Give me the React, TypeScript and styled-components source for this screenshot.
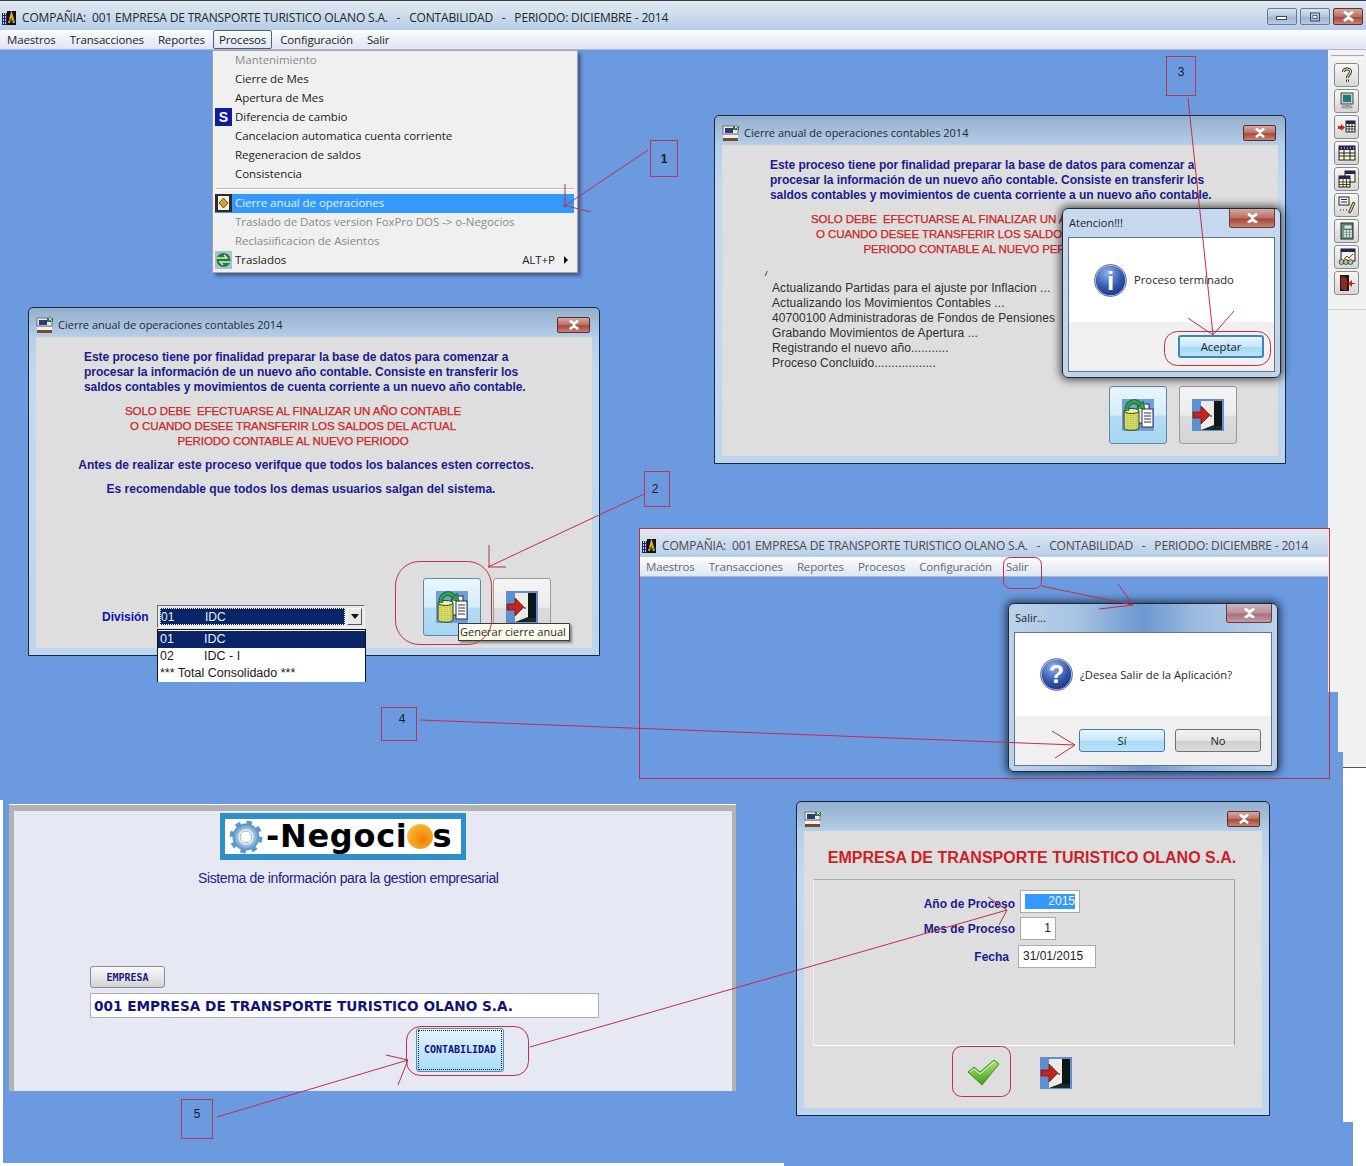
import React from "react";
import styled, { createGlobalStyle } from "styled-components";

const Global = createGlobalStyle`
  html, body { margin: 0; padding: 0; background: #fff; }
  body { font-family: "Liberation Sans", Arial, sans-serif; }
`;

const ui = `"Open Sans", "Noto Sans", sans-serif`;
const arial = `"Liberation Sans", Arial, sans-serif`;
const mono = `"DejaVu Sans Mono", "Liberation Mono", monospace`;
const closeFace = "linear-gradient(#d2aaa3, #bb6f61 50%, #a4483b 55%, #c58476)";

const Desktop = styled.div`
  position: relative;
  width: 1366px;
  height: 1166px;
  overflow: hidden;
  background: #6b9ae0;
`;

const Patch = styled.div<{ $x: number; $y: number; $w: number; $h: number; $c: string }>`
  position: absolute;
  left: ${(p) => p.$x}px;
  top: ${(p) => p.$y}px;
  width: ${(p) => p.$w}px;
  height: ${(p) => p.$h}px;
  background: ${(p) => p.$c};
`;

/* ---------- application chrome ---------- */
const AppHeader = styled.header`
  width: 100%;
`;
const FloatingHeader = styled.header`
  position: absolute;
  left: 640px;
  top: 529px;
  width: 688px;
`;
const TitleBar = styled.div<{ $h: number }>`
  display: flex;
  align-items: center;
  height: ${(p) => p.$h}px;
  box-sizing: border-box;
  padding: 5px 0 0 2px;
  background: linear-gradient(#e2eaf2, #b6cde9);
`;
const TopEdge = styled.div`
  height: 1px;
  background: #3a3f46;
`;
const AppTitle = styled.span<{ $dim?: boolean }>`
  margin-left: 4px;
  font: 12px/16px ${ui};
  letter-spacing: -0.17px;
  white-space: pre;
  color: ${(p) => (p.$dim ? "#4a4a4a" : "#262626")};
`;
const Controls = styled.div`
  display: flex;
  gap: 3px;
  margin-left: auto;
  margin-right: 3px;
  margin-top: -3px;
`;
const WinControl = styled.button<{ $close?: boolean }>`
  display: flex;
  align-items: center;
  justify-content: center;
  width: 30px;
  height: 17px;
  padding: 0;
  border: 1px solid ${(p) => (p.$close ? "#6a2f2a" : "#6c7c90")};
  border-radius: 2px;
  background: ${(p) => (p.$close ? closeFace : "linear-gradient(#d8e4f0, #b2c6de 50%, #9cb4d0 55%, #b8cce2)")};
`;
const MenuBar = styled.nav<{ $dim?: boolean }>`
  display: flex;
  gap: 14px;
  height: 20px;
  box-sizing: border-box;
  padding-left: ${(p) => (p.$dim ? 6 : 7)}px;
  align-items: center;
  background: linear-gradient(#fdfefe, #f4f6fb 25%, #dfe5f2);
  border-bottom: 1px solid #a9b6c9;
  font: 11.5px/16px ${ui};
  letter-spacing: -0.15px;
  color: ${(p) => (p.$dim ? "#666a70" : "#1e1e1e")};
`;
const MenuItem = styled.span<{ $open?: boolean }>`
  position: relative;
  ${(p) =>
    p.$open &&
    `&::before{content:"";position:absolute;left:-6px;right:-6px;top:-2px;bottom:-1px;border:1px solid #50607a;border-radius:2px;}`}
`;
const MenuPanel = styled.div`
  position: absolute;
  z-index: 6;
  left: 212px;
  top: 50px;
  width: 366px;
  height: 223px;
  box-sizing: border-box;
  padding: 0 3px 0 2px;
  background: #f0f0f0;
  border: 1px solid #a4a4a4;
  box-shadow: 3px 3px 3px rgba(40, 50, 80, 0.55);
  font: 11.5px/15px ${ui};
  letter-spacing: -0.05px;
`;
const Row = styled.div<{ $sel?: boolean; $off?: boolean }>`
  display: flex;
  align-items: center;
  height: 19px;
  box-sizing: border-box;
  padding-bottom: 2px;
  background: ${(p) => (p.$sel ? "#3399ff" : "transparent")};
  color: ${(p) => (p.$sel ? "#e8f2ff" : p.$off ? "#8a8a8a" : "#222")};
`;
const Gutter = styled.span`
  display: flex;
  width: 20px;
  flex: none;
  justify-content: flex-start;
`;
const Shortcut = styled.span`
  margin-left: auto;
  margin-right: 9px;
`;
const Caret = styled.span`
  width: 0;
  height: 0;
  margin-right: 6px;
  border-left: 4px solid #111;
  border-top: 4px solid transparent;
  border-bottom: 4px solid transparent;
`;
const Separator = styled.div`
  height: 1px;
  margin: 4px 0 4px 1px;
  background: #b8b8b8;
  border-bottom: 1px solid #fff;
`;

/* ---------- toolbar ---------- */
const ToolStrip = styled.aside`
  position: absolute;
  left: 1328px;
  top: 50px;
  width: 38px;
  height: 260px;
  box-sizing: border-box;
  padding: 13px 0 0 6px;
  display: flex;
  flex-direction: column;
  gap: 2px;
  background: #f1f1f1;
  border-bottom: 1px solid #cfd3dc;
  &::before {
    content: "";
    position: absolute;
    left: 3px;
    right: 2px;
    top: 5px;
    height: 2px;
    border-top: 1px solid #a8a8a8;
    border-bottom: 1px solid #fff;
  }
`;
const ToolButton = styled.button`
  display: flex;
  align-items: center;
  justify-content: center;
  width: 25px;
  height: 24px;
  padding: 0;
  border: 1px solid #8a8a8a;
  border-radius: 3px;
  background: linear-gradient(#f8f8f8, #e6e6e6 50%, #d6d6d6);
`;

/* ---------- dialog windows ---------- */
const Win = styled.section<{ $x: number; $y: number; $w: number; $h: number }>`
  position: absolute;
  left: ${(p) => p.$x}px;
  top: ${(p) => p.$y}px;
  width: ${(p) => p.$w}px;
  height: ${(p) => p.$h}px;
  box-sizing: border-box;
  display: flex;
  flex-direction: column;
  padding: 0 7px 7px;
  border: 1px solid #182838;
  border-radius: 5px 5px 0 0;
  background: linear-gradient(#93afcc, #b6cfea 30px, #c3d9f0 70px, #bdd5ee);
`;
const WinBar = styled.div`
  display: flex;
  align-items: center;
  height: 29px;
  box-sizing: border-box;
  padding-top: 5px;
  flex: none;
`;
const WinTitle = styled.span`
  margin-left: 4px;
  font: 11px/16px ${ui};
  color: #2a2a2a;
`;
const WinClose = styled.button`
  display: flex;
  align-items: center;
  justify-content: center;
  width: 33px;
  height: 16px;
  margin-left: auto;
  margin-right: 2px;
  padding: 0;
  border: 1px solid #5e2c28;
  border-radius: 2px;
  background: ${closeFace};
`;
const Client = styled.div`
  flex: 1;
  display: flex;
  flex-direction: column;
  min-height: 0;
  padding-top: 13px;
  padding-bottom: 12px;
  background: #dedede;
`;
const Para = styled.p<{ $w?: number; $ml?: number; $mt?: number; $align?: string; $tight?: boolean }>`
  margin: ${(p) => p.$mt ?? 0}px 0 0 ${(p) => p.$ml ?? 0}px;
  width: ${(p) => (p.$w ? `${p.$w}px` : "auto")};
  font: bold 12px/15px ${arial};
  letter-spacing: ${(p) => (p.$tight ? "-0.06px" : "0")};
  white-space: pre;
  text-align: ${(p) => p.$align ?? "left"};
  color: #1b1b90;
`;
const Warning = styled.p<{ $mt?: number }>`
  margin: ${(p) => p.$mt ?? 0}px 0 0;
  width: 514px;
  text-align: center;
  font: 11.5px/15px ${arial};
  letter-spacing: -0.08px;
  -webkit-text-stroke: 0.25px #c92424;
  white-space: pre;
  color: #cf2424;
`;
const Log = styled.div`
  margin: 24px 0 0 50px;
  font: 12px/15px ${arial};
  letter-spacing: 0.09px;
  color: #2e2e2e;
  white-space: pre;
  position: relative;
  &::before {
    content: "/";
    position: absolute;
    left: -7px;
    top: -11px;
    font: italic bold 7px/8px ${arial};
    color: #1b1b90;
  }
`;
const ActionRow = styled.div<{ $pl: number }>`
  display: flex;
  align-items: flex-end;
  margin-top: auto;
  padding-left: ${(p) => p.$pl}px;
`;
const BigButton = styled.button<{ $hot?: boolean }>`
  position: relative;
  display: flex;
  align-items: center;
  justify-content: center;
  width: 58px;
  height: 58px;
  padding: 0;
  margin-right: 12px;
  border: 1px solid ${(p) => (p.$hot ? "#5c8aa8" : "#9a9a9a")};
  border-radius: 3px;
  background: ${(p) =>
    p.$hot
      ? "linear-gradient(#eaf6fd, #d4edfb 50%, #b4dcf4 52%, #a7d5f1)"
      : "linear-gradient(#f5f5f5, #ececec 50%, #dcdcdc 52%, #d4d4d4)"};
`;
const DivLabel = styled.span`
  width: 55px;
  flex: none;
  margin-bottom: 11px;
  font: bold 12px/15px ${arial};
  color: #1010b0;
`;
const SelectBox = styled.div`
  position: relative;
  width: 208px;
  height: 23px;
  flex: none;
  margin: 0 58px 8px 0;
  box-sizing: border-box;
  display: flex;
  padding: 2px;
  border: 1px solid;
  border-color: #6e6e6e #f4f4f4 #f4f4f4 #6e6e6e;
  background: #e8e8e8;
`;
const SelectValue = styled.div`
  flex: 1;
  display: flex;
  align-items: center;
  padding: 1px 0 0 1px;
  background: #0a2468;
  outline: 1px dotted #fff;
  outline-offset: -1px;
  font: 12px/15px ${arial};
  color: #e8eefc;
`;
const Cell = styled.span`
  width: 44px;
`;
const SelectArrow = styled.div`
  width: 15px;
  margin-left: 2px;
  display: flex;
  align-items: center;
  justify-content: center;
  background: #e6e6e6;
  border: 1px solid;
  border-color: #fff #555 #555 #fff;
  box-sizing: border-box;
  &::after {
    content: "";
    border-top: 5px solid #111;
    border-left: 4px solid transparent;
    border-right: 4px solid transparent;
  }
`;
const Dropdown = styled.ul`
  position: absolute;
  z-index: 4;
  left: -1px;
  top: 23px;
  width: 209px;
  margin: 0;
  padding: 1px 0 0;
  list-style: none;
  background: #fff;
  border: 1px solid #111;
  border-bottom: 0;
  box-sizing: border-box;
  font: 12.5px/17px ${arial};
  color: #181818;
`;
const DropItem = styled.li<{ $sel?: boolean }>`
  display: flex;
  height: 17px;
  padding-left: 2px;
  white-space: pre;
  background: ${(p) => (p.$sel ? "#0a2468" : "transparent")};
  color: ${(p) => (p.$sel ? "#e8eefc" : "inherit")};
`;
const Tooltip = styled.div`
  position: absolute;
  z-index: 5;
  left: 34px;
  top: 44px;
  width: 112px;
  height: 18px;
  box-sizing: border-box;
  border: 1px solid #3a3a3a;
  padding-left: 1px;
  background: linear-gradient(#fffff4, #fbfbe4);
  box-shadow: 2px 2px 2px rgba(0, 0, 0, 0.4);
  font: 11px/16px ${ui};
  color: #262626;
  white-space: nowrap;
  text-align: left;
`;

/* ---------- message boxes ---------- */
const Modal = styled.section<{ $x: number; $y: number; $w: number; $h: number; $glass?: boolean }>`
  position: absolute;
  z-index: 3;
  left: ${(p) => p.$x}px;
  top: ${(p) => p.$y}px;
  width: ${(p) => p.$w}px;
  height: ${(p) => p.$h}px;
  box-sizing: border-box;
  display: flex;
  flex-direction: column;
  padding: 0 5px 5px;
  border: 1px solid #1c2a3a;
  border-radius: 6px;
  background: ${(p) =>
    p.$glass
      ? "linear-gradient(90deg, #bcd2ea, #a8c4e4 25%, #6c97d0 50%, #9dbce0 70%, #bcd2ea)"
      : "linear-gradient(#c6d9ee, #bfd4ea)"};
  box-shadow: 0 0 9px 2px rgba(0, 0, 0, 0.65);
`;
const ModalBar = styled.div`
  display: flex;
  height: 28px;
  flex: none;
  justify-content: space-between;
`;
const ModalTitle = styled.span`
  margin: 6px 0 0 1px;
  font: 11px/16px ${ui};
  color: #1e1e1e;
`;
const ModalClose = styled.button<{ $faded?: boolean }>`
  display: flex;
  align-items: center;
  justify-content: center;
  width: 46px;
  height: 19px;
  padding: 0;
  border: 1px solid #6d3a36;
  border-top: 0;
  border-radius: 0 0 3px 3px;
  background: ${(p) => (p.$faded ? "linear-gradient(#c8b4bc, #b8939c 50%, #a86f75 55%, #c29ea6)" : closeFace)};
`;
const ModalPanel = styled.div`
  flex: 1;
  display: flex;
  flex-direction: column;
  border: 1px solid #647486;
  background: #fff;
`;
const ModalBody = styled.div`
  flex: 1;
  display: flex;
  align-items: center;
  gap: 7px;
  padding: 0 0 0 25px;
  font: 11.25px/16px ${ui};
  color: #262626;
`;
const ModalFoot = styled.div`
  flex: none;
  display: flex;
  justify-content: flex-end;
  gap: 10px;
  height: 49px;
  box-sizing: border-box;
  padding: 13px 10px 0 0;
  background: #f0f0f0;
`;
const AeroButton = styled.button<{ $hot?: boolean; $focus?: boolean }>`
  width: 86px;
  height: 23px;
  padding: 0;
  border: ${(p) => (p.$focus ? "2px solid #3f86b4" : p.$hot ? "1px solid #3c7fb1" : "1px solid #707070")};
  border-radius: 3px;
  background: ${(p) =>
    p.$hot || p.$focus
      ? "linear-gradient(#e8f5fd, #c6e6f9 50%, #a6d9f6 55%, #bde3f8)"
      : "linear-gradient(#f2f2f2, #e6e6e6 50%, #cfcfcf 55%, #dcdcdc)"};
  font: 11.25px/16px ${ui};
  color: #222;
`;

/* ---------- login panel ---------- */
const LoginPanel = styled.section`
  position: absolute;
  left: 9px;
  top: 804px;
  width: 727px;
  height: 287px;
  box-sizing: border-box;
  display: flex;
  flex-direction: column;
  align-items: flex-start;
  border-top: 1px solid #fff;
  background: #e6e8f4;
  padding: 8px 4px 0 5px;
  &::before {
    content: "";
    position: absolute;
    inset: 0;
    pointer-events: none;
    border: solid #b2b2b2;
    border-width: 6px 4px 0 5px;
  }
`;
const LogoBox = styled.div`
  margin-left: 206px;
  width: 246px;
  height: 47px;
  box-sizing: border-box;
  border: 6px solid #2f8fcb;
  border-width: 6px 5px;
  background: #fff;
  display: flex;
  align-items: center;
  padding-left: 4px;
  overflow: hidden;
`;
const LogoText = styled.span`
  margin-left: 3px;
  font: bold 32px/35px "DejaVu Sans", Verdana, sans-serif;
  color: #000;
  letter-spacing: 0.7px;
  white-space: nowrap;
`;
const Sun = styled.span`
  display: inline-block;
  width: 26px;
  height: 25px;
  margin: 0 0 0 -1px;
  border-radius: 50%;
  vertical-align: -2px;
  background: radial-gradient(circle at 60% 62%, #ee8208, #f9ac2a 60%, #fde4a4);
`;
const Tagline = styled.p`
  margin: 10px 0 0 184px;
  font: 14px/16px ${arial};
  letter-spacing: -0.37px;
  color: #232386;
  white-space: nowrap;
`;
const SmallButton = styled.button`
  margin: 80px 0 0 76px;
  width: 75px;
  height: 22px;
  padding: 1px 0 0;
  border: 1px solid #8c8c8c;
  border-radius: 3px;
  background: linear-gradient(#f6f6f6, #e8e8e8 50%, #d2d2d2);
  font: bold 10px/14px ${mono};
  color: #1a1a80;
`;
const CompanyField = styled.div`
  margin: 5px 0 0 76px;
  width: 509px;
  height: 25px;
  box-sizing: border-box;
  padding-left: 3px;
  background: #fff;
  border: 1px solid #aeaeae;
  font: bold 13.65px/25px "DejaVu Sans", Verdana, sans-serif;
  color: #12127e;
  white-space: pre;
`;
const ModuleButton = styled.button`
  margin: 10px 0 0 402px;
  width: 88px;
  height: 44px;
  padding: 0;
  border: 1px solid #5d8aa6;
  border-radius: 3px;
  background: linear-gradient(#eaf6fd, #c4e6fa 50%, #a8dcf8);
  font: bold 10px/14px ${mono};
  color: #12127e;
  outline: 1px dotted #123;
  outline-offset: -3px;
`;

/* ---------- year form ---------- */
const FormClient = styled.div`
  flex: 1;
  background: #dedede;
  display: flex;
  flex-direction: column;
  padding: 18px 0 0 9px;
`;
const FormHeading = styled.h2`
  margin: 0;
  width: 438px;
  text-align: center;
  font: bold 16px/18px ${arial};
  color: #cc1f27;
  white-space: nowrap;
`;
const GroupBox = styled.div`
  margin-top: 12px;
  width: 422px;
  height: 167px;
  box-sizing: border-box;
  padding-top: 10px;
  display: flex;
  flex-direction: column;
  gap: 4px;
  border: 1px solid;
  border-color: #a8a8a8 #a0a0a0 #fff #f4f4f4;
`;
const FormRow = styled.div<{ $lw: number; $gap: number; $mt?: number }>`
  display: grid;
  grid-template-columns: ${(p) => p.$lw}px auto;
  column-gap: ${(p) => p.$gap}px;
  justify-content: start;
  align-items: center;
  margin-top: ${(p) => p.$mt ?? 0}px;
`;
const FormLabel = styled.label<{ $drop?: number }>`
  padding-top: ${(p) => p.$drop ?? 2}px;
  text-align: right;
  font: bold 12px/15px ${arial};
  color: #1b1b90;
  white-space: nowrap;
`;
const FormInput = styled.div<{ $w: number; $align?: string }>`
  width: ${(p) => p.$w}px;
  height: 23px;
  box-sizing: border-box;
  padding: 0 4px;
  display: flex;
  align-items: center;
  justify-content: ${(p) => p.$align ?? "flex-end"};
  background: #fff;
  border: 1px solid #aaa;
  font: 12px/15px ${arial};
  color: #222;
`;
const Selected = styled.span`
  flex: 1;
  height: 15px;
  line-height: 15px;
  text-align: right;
  background: #3399ff;
  color: #f2f8ff;
`;
const FormActions = styled.div`
  display: flex;
  gap: 40px;
  margin: 11px 0 0 155px;
`;

/* ---------- annotations ---------- */
const Callout = styled.div<{ $x: number; $y: number; $w: number; $h: number; $bold?: boolean; $pb?: number; $pl?: number; $pr?: number }>`
  position: absolute;
  z-index: 8;
  left: ${(p) => p.$x}px;
  top: ${(p) => p.$y}px;
  width: ${(p) => p.$w}px;
  height: ${(p) => p.$h}px;
  box-sizing: border-box;
  padding: 0 ${(p) => p.$pr ?? 0}px ${(p) => p.$pb ?? 0}px ${(p) => p.$pl ?? 0}px;
  display: flex;
  align-items: center;
  justify-content: center;
  border: 1px solid #b33a4c;
  font: ${(p) => (p.$bold ? "bold " : "")}12px/14px ${arial};
  color: #1a1a1a;
`;
const Ink = styled.svg`
  position: absolute;
  z-index: 7;
  left: 0;
  top: 0;
  pointer-events: none;
`;

/* ---------- drawings ---------- */
const X = ({ s = 12 }: { s?: number }) => (
  <svg width={s} height={s * 0.8} viewBox="0 0 10 8">
    <path d="M1.5 .5 5 3 8.5 .5M1.5 7.5 5 5 8.5 7.5" stroke="#fff" strokeWidth="2.2" fill="none" />
  </svg>
);
const DocIcon = () => (
  <svg width="18" height="17" viewBox="0 0 18 17">
    <rect x="1" y="1" width="15" height="8" fill="#e8e8e8" stroke="#777" />
    <rect x="3" y="3" width="8" height="5" fill="#2c3c70" />
    <path d="M11 1h6v4h-6z" fill="#2e7a3a" />
    <path d="M13 3l3-2M13 1l3 3" stroke="#fff" strokeWidth=".8" />
    <rect x="1" y="10" width="15" height="3" fill="#f0f0f0" />
    <rect x="1" y="13" width="15" height="3" fill="#7a4a20" />
  </svg>
);
const AppIcon = () => (
  <svg width="16" height="16" viewBox="0 0 16 16">
    <rect x="0" y="3" width="5" height="12" fill="#20245a" />
    <path d="M1 4h1M3 4h1M1 7h1M3 7h1M1 10h1M3 10h1M1 13h1M3 13h1" stroke="#fff" strokeWidth="1.4" />
    <rect x="5" y="1" width="9" height="14" fill="#111" />
    <path d="M7 13 9.5 4 12 13" stroke="#d8b020" strokeWidth="2" fill="none" />
    <rect x="7" y="9" width="3" height="2" fill="#c03030" />
    <rect x="10" y="10" width="3" height="2" fill="#30a040" />
  </svg>
);
const MinGlyph = () => (
  <svg width="12" height="8" viewBox="0 0 12 8">
    <rect x=".5" y="3.5" width="10" height="3" fill="#fff" stroke="#3a4a60" />
  </svg>
);
const MaxGlyph = () => (
  <svg width="12" height="10" viewBox="0 0 12 10">
    <rect x="1.5" y="1" width="9" height="8" fill="none" stroke="#3a4a60" />
    <rect x="4" y="3.5" width="4" height="3" fill="#fff" stroke="#3a4a60" strokeWidth=".8" />
  </svg>
);
const DollarIcon = () => (
  <svg width="17" height="18" viewBox="0 0 17 18">
    <rect width="17" height="18" fill="#101c9c" />
    <text x="8.5" y="14" textAnchor="middle" fontFamily="Liberation Sans" fontWeight="bold" fontSize="14" fill="#fff">S</text>
  </svg>
);
const YearIcon = () => (
  <svg width="17" height="18" viewBox="0 0 17 18">
    <rect width="17" height="18" fill="#2b2b2b" />
    <rect x="3" y="2" width="11" height="14" fill="#f4f0e0" />
    <path d="M8.5 4 13 9l-4.5 5L4 9z" fill="#d8a020" stroke="#222" strokeWidth=".7" />
  </svg>
);
const TransferIcon = () => (
  <svg width="17" height="18" viewBox="0 0 17 18">
    <rect width="17" height="18" fill="#a8c0d8" />
    <circle cx="8.5" cy="9" r="7" fill="#257a3a" />
    <path d="M2 7h10l-3-3M15 11H5l3 3" stroke="#d8f0d0" strokeWidth="1.4" fill="none" />
  </svg>
);
const CopyIcon = () => (
  <svg width="32" height="32" viewBox="0 0 32 32">
    <rect width="32" height="32" fill="#6f9fd8" />
    <rect x="16" y="5" width="11" height="19" fill="#eef2f2" stroke="#26304a" />
    <rect x="20" y="10" width="11" height="18" fill="#fff" stroke="#26304a" />
    <path d="M22 14h7M22 17h7M22 20h7M22 23h7" stroke="#26304a" />
    <path d="M2 12c0-2 15-2 15 0v17c0 3-15 3-15 0z" fill="#c6cf5a" stroke="#32401a" />
    <path d="M4 13v17M7 13v18M10 13v18M13 13v18" stroke="#eef0a0" strokeDasharray="1 1" />
    <ellipse cx="9.500" cy="12" rx="7.500" ry="2.500" fill="#eef0a6" stroke="#32401a" />
    <path d="M5 12C4 3 13-1 19 7" stroke="#0f5a22" strokeWidth="4.500" fill="none" />
    <path d="M5 12C4 3 13-1 19 7" stroke="#2ca34a" strokeWidth="3" fill="none" />
    <path d="M15 9 23 10 21 2z" fill="#2ca34a" stroke="#0f5a22" strokeWidth=".7" />
  </svg>
);
const ExitIcon = () => (
  <svg width="32" height="32" viewBox="0 0 32 32">
    <rect width="32" height="32" fill="#5f8fd0" />
    <rect x="9" y="2" width="21" height="29" fill="#182a22" />
    <path d="M9 2h13v24L9 31z" fill="#eceae4" />
    <rect x="22" y="2" width="8" height="25" fill="#0e1613" />
    <path d="M1 13h8V7l9 9-9 9v-6H1z" fill="#c2241e" stroke="#6a0f0c" strokeWidth=".7" />
    <circle cx="19" cy="17" r="1" fill="#555" />
  </svg>
);
const CheckIcon = () => (
  <svg width="32" height="32" viewBox="0 0 32 32">
    <defs>
      <linearGradient id="chk" x1="0" y1="0" x2="0" y2="1">
        <stop offset="0" stopColor="#b6e27a" />
        <stop offset="1" stopColor="#3fa020" />
      </linearGradient>
    </defs>
    <path d="M0 15 6 10l6 5L26 3l5 4-17 21z" fill="url(#chk)" stroke="#3b8a2a" />
    <path d="M2 15l4-3 6 5 14-12" stroke="#e6f8cf" fill="none" />
  </svg>
);
const Orb = ({ glyph }: { glyph: string }) => (
  <svg width="33" height="33" viewBox="0 0 33 33">
    <defs>
      <radialGradient id={`orb${glyph}`} cx=".4" cy=".25" r=".9">
        <stop offset="0" stopColor="#8fb2e8" />
        <stop offset=".55" stopColor="#2f55ae" />
        <stop offset="1" stopColor="#15297a" />
      </radialGradient>
    </defs>
    <circle cx="16.5" cy="16.5" r="15.5" fill={`url(#orb${glyph})`} stroke="#c6cedd" strokeWidth="1.6" />
    <circle cx="16.5" cy="16.5" r="16" fill="none" stroke="#3a4c88" strokeWidth=".7" />
    <text x="16.5" y={glyph === "i" ? 26 : 25} textAnchor="middle" fontFamily="Liberation Sans" fontWeight="bold" fontSize={glyph === "i" ? 26 : 25} fill="#fff">{glyph}</text>
  </svg>
);
const Gear = () => (
  <svg width="34" height="34" viewBox="0 0 34 34">
    <defs>
      <radialGradient id="gearfill" cx=".5" cy=".5" r=".6">
        <stop offset=".4" stopColor="#dbe8f4" />
        <stop offset="1" stopColor="#5b96cc" />
      </radialGradient>
    </defs>
    <circle cx="17" cy="17" r="14.5" fill="none" stroke="#5e98cc" strokeWidth="4" strokeDasharray="5.4 6" />
    <circle cx="17" cy="17" r="10.5" fill="none" stroke="url(#gearfill)" strokeWidth="6" />
    <circle cx="17" cy="17" r="6" fill="#fff" stroke="#8fb2d0" />
  </svg>
);

const tb = { w: 18, h: 18 };
const ToolIcons: React.ReactNode[] = [
  <svg key="a" width={tb.w} height={tb.h} viewBox="0 0 18 18"><path d="M5.500 6C5.500 2 12.500 2 12.500 5.500 12.500 8.500 9.500 8.500 9.500 12M9.500 13.500v2.500" stroke="#333" strokeWidth="3" fill="none" /><path d="M5.500 6C5.500 2 12.500 2 12.500 5.500 12.500 8.500 9.500 8.500 9.500 12M9.500 13.500v2.500" stroke="#f4e8b0" strokeWidth="1.100" fill="none" /></svg>,
  <svg key="b" width={tb.w} height={tb.h} viewBox="0 0 18 18"><rect x="3" y="1" width="12" height="11" fill="#ccc" stroke="#444" /><rect x="5" y="3" width="8" height="7" fill="#1f7a78" /><rect x="7" y="12" width="4" height="2" fill="#999" /><rect x="4" y="14" width="10" height="2" fill="#bbb" stroke="#666" strokeWidth=".5" /></svg>,
  <svg key="c" width={tb.w} height={tb.h} viewBox="0 0 18 18"><path d="M0 8h3V6l4 3.500L3 13v-2H0z" fill="#c8231c" /><rect x="8" y="3" width="9" height="11" fill="#f4f4d8" stroke="#222" /><rect x="8" y="3" width="9" height="3" fill="#20245a" /><path d="M8 8.500h9M8 11h9M11 6v8M14 6v8" stroke="#222" strokeWidth=".8" /></svg>,
  <svg key="d" width={tb.w} height={tb.h} viewBox="0 0 18 18"><rect x="1" y="2" width="16" height="14" fill="#fafad8" stroke="#222" /><rect x="1" y="2" width="16" height="4" fill="#20245a" /><path d="M3 4h1M6 4h1M9 4h1M12 4h1M15 4h1" stroke="#fff" /><path d="M1 9h16M1 12h16M6 6v10M12 6v10" stroke="#222" /></svg>,
  <svg key="e" width={tb.w} height={tb.h} viewBox="0 0 18 18"><rect x="7" y="1" width="10" height="11" fill="#f4f4d8" stroke="#222" /><rect x="7" y="1" width="10" height="3" fill="#20245a" /><rect x="1" y="6" width="11" height="11" fill="#fafad8" stroke="#222" /><rect x="1" y="6" width="11" height="3" fill="#20245a" /><path d="M1 12h11M1 14.500h11M5 9v8M8.500 9v8" stroke="#222" strokeWidth=".8" /></svg>,
  <svg key="f" width={tb.w} height={tb.h} viewBox="0 0 18 18"><rect x="1" y="1" width="10" height="8" fill="#f8f8f0" stroke="#222" /><path d="M3 3.500h6M3 6h6" stroke="#20245a" /><path d="M2 14h1M5 14h1M8 14h1" stroke="#222" /><path d="M11 15 15 6l2 1-4 9-2 1z" fill="#e8c060" stroke="#222" strokeWidth=".8" /></svg>,
  <svg key="g" width={tb.w} height={tb.h} viewBox="0 0 18 18"><rect x="3" y="1" width="12" height="16" fill="#6f9a90" stroke="#222" /><rect x="6" y="3" width="8" height="4" fill="#d8e8d8" stroke="#222" strokeWidth=".5" /><path d="M6 9h2M9 9h2M12 9h2M6 11.500h2M9 11.500h2M12 11.500h2M6 14h2M9 14h2M12 14h2" stroke="#e4f2ec" strokeWidth="1.400" /></svg>,
  <svg key="h" width={tb.w} height={tb.h} viewBox="0 0 18 18"><rect x="3" y="1" width="14" height="12" fill="#f0f0e4" stroke="#222" /><rect x="3" y="1" width="14" height="3" fill="#20245a" /><path d="M6 11l3-3 2 2 4-4" stroke="#c02020" fill="none" /><circle cx="3.500" cy="14" r="2.500" fill="#9cc0c0" stroke="#222" strokeWidth=".7" /><circle cx="8" cy="14" r="2.500" fill="#c0c070" stroke="#222" strokeWidth=".7" /><circle cx="12.500" cy="14" r="2.500" fill="#9cc0c0" stroke="#222" strokeWidth=".7" /></svg>,
  <svg key="i" width={tb.w} height={tb.h} viewBox="0 0 18 18"><rect x="2" y="1" width="9" height="16" fill="#1a1a1a" /><path d="M3 2l6 2v13l-6-2z" fill="#8a2a20" /><path d="M17 9h-3V6l-4 3.500 4 3.500v-3h3z" fill="#c8231c" /></svg>,
];

const mainMenu = ["Maestros", "Transacciones", "Reportes", "Procesos", "Configuración", "Salir"];
const titleText = "COMPAÑIA:  001 EMPRESA DE TRANSPORTE TURISTICO OLANO S.A.   -   CONTABILIDAD   -   PERIODO: DICIEMBRE - 2014";

const IntroText = () => (
  <>
    <Para $tight $ml={48}>Este proceso tiene por finalidad preparar la base de datos para comenzar a</Para>
    <Para $tight $ml={48}>procesar la información de un nuevo año contable. Consiste en transferir los</Para>
    <Para $tight $ml={48}>saldos contables y movimientos de cuenta corriente a un nuevo año contable.</Para>
    <Warning $mt={9}>SOLO DEBE  EFECTUARSE AL FINALIZAR UN AÑO CONTABLE</Warning>
    <Warning>O CUANDO DESEE TRANSFERIR LOS SALDOS DEL ACTUAL</Warning>
    <Warning>PERIODO CONTABLE AL NUEVO PERIODO</Warning>
  </>
);

const DialogBar = ({ title }: { title?: string }) => (
  <WinBar>
    <DocIcon />
    {title && <WinTitle>{title}</WinTitle>}
    <WinClose aria-label="Cerrar"><X /></WinClose>
  </WinBar>
);

export default function App() {
  return (
    <Desktop>
      <Global />

      {/* areas of the collage that are not desktop */}
      <Patch $x={1328} $y={50} $w={38} $h={642} $c="#f1f1f1" />
      <Patch $x={1338} $y={692} $w={28} $h={60} $c="#f1f1f1" />
      <Patch $x={1343} $y={752} $w={23} $h={15} $c="#f1f1f1" />
      <Patch $x={1343} $y={767} $w={23} $h={1} $c="#555" />
      <Patch $x={1343} $y={768} $w={23} $h={354} $c="#fff" />
      <Patch $x={1353} $y={1122} $w={13} $h={44} $c="#fff" />
      <Patch $x={0} $y={800} $w={3} $h={366} $c="#fff" />
      <Patch $x={0} $y={1163} $w={784} $h={3} $c="#fff" />

      <AppHeader>
        <TopEdge />
        <TitleBar $h={29}>
          <AppIcon />
          <AppTitle>{titleText}</AppTitle>
          <Controls>
            <WinControl aria-label="Minimizar"><MinGlyph /></WinControl>
            <WinControl aria-label="Maximizar"><MaxGlyph /></WinControl>
            <WinControl $close aria-label="Cerrar"><X s={13} /></WinControl>
          </Controls>
        </TitleBar>
        <MenuBar>
          {mainMenu.map((m) => (
            <MenuItem key={m} $open={m === "Procesos"}>{m}</MenuItem>
          ))}
        </MenuBar>
      </AppHeader>

      <MenuPanel>
        <Row $off><Gutter />Mantenimiento</Row>
        <Row><Gutter />Cierre de Mes</Row>
        <Row><Gutter />Apertura de Mes</Row>
        <Row><Gutter><DollarIcon /></Gutter>Diferencia de cambio</Row>
        <Row><Gutter />Cancelacion automatica cuenta corriente</Row>
        <Row><Gutter />Regeneracion de saldos</Row>
        <Row><Gutter />Consistencia</Row>
        <Separator />
        <Row $sel><Gutter><YearIcon /></Gutter>Cierre anual de operaciones</Row>
        <Row $off><Gutter />Traslado de Datos version FoxPro DOS  -&gt; o-Negocios</Row>
        <Row $off><Gutter />Reclasiificacion de Asientos</Row>
        <Row><Gutter><TransferIcon /></Gutter>Traslados<Shortcut>ALT+P</Shortcut><Caret /></Row>
      </MenuPanel>

      <ToolStrip>
        {ToolIcons.map((icon, i) => (
          <ToolButton key={i}>{icon}</ToolButton>
        ))}
      </ToolStrip>

      {/* first closing dialog */}
      <Win $x={28} $y={307} $w={572} $h={349}>
        <DialogBar title="Cierre anual de operaciones contables 2014" />
        <Client>
          <IntroText />
          <Para $mt={9} $w={540} $align="center">Antes de realizar este proceso verifque que todos los balances esten correctos.</Para>
          <Para $mt={9} $w={530} $align="center">Es recomendable que todos los demas usuarios salgan del sistema.</Para>
          <ActionRow $pl={66}>
            <DivLabel>División</DivLabel>
            <SelectBox>
              <SelectValue><Cell>01</Cell>IDC</SelectValue>
              <SelectArrow />
              <Dropdown>
                <DropItem $sel><Cell>01</Cell>IDC</DropItem>
                <DropItem><Cell>02</Cell>IDC - I</DropItem>
                <DropItem>*** Total Consolidado ***</DropItem>
              </Dropdown>
            </SelectBox>
            <BigButton $hot>
              <CopyIcon />
              <Tooltip>Generar cierre anual</Tooltip>
            </BigButton>
            <BigButton><ExitIcon /></BigButton>
          </ActionRow>
        </Client>
      </Win>

      {/* second closing dialog */}
      <Win $x={714} $y={115} $w={572} $h={349}>
        <DialogBar title="Cierre anual de operaciones contables 2014" />
        <Client>
          <IntroText />
          <Log>{`Actualizando Partidas para el ajuste por Inflacion ...
Actualizando los Movimientos Contables ...
40700100 Administradoras de Fondos de Pensiones
Grabando Movimientos de Apertura ...
Registrando el nuevo año...........
Proceso Concluido..................`}</Log>
          <ActionRow $pl={387}>
            <BigButton $hot><CopyIcon /></BigButton>
            <BigButton><ExitIcon /></BigButton>
          </ActionRow>
        </Client>
      </Win>

      <Modal $x={1062} $y={208} $w={219} $h={170}>
        <ModalBar>
          <ModalTitle>Atencion!!!</ModalTitle>
          <ModalClose aria-label="Cerrar"><X s={13} /></ModalClose>
        </ModalBar>
        <ModalPanel>
          <ModalBody>
            <Orb glyph="i" />
            Proceso terminado
          </ModalBody>
          <ModalFoot>
            <AeroButton $focus>Aceptar</AeroButton>
          </ModalFoot>
        </ModalPanel>
      </Modal>

      {/* exit confirmation */}
      <FloatingHeader>
        <TitleBar $h={28}>
          <AppIcon />
          <AppTitle $dim>{titleText}</AppTitle>
        </TitleBar>
        <MenuBar $dim>
          {mainMenu.map((m) => (
            <MenuItem key={m}>{m}</MenuItem>
          ))}
        </MenuBar>
      </FloatingHeader>

      <Modal $glass $x={1008} $y={603} $w={270} $h={169}>
        <ModalBar>
          <ModalTitle>Salir...</ModalTitle>
          <ModalClose $faded aria-label="Cerrar"><X s={13} /></ModalClose>
        </ModalBar>
        <ModalPanel>
          <ModalBody>
            <Orb glyph="?" />
            ¿Desea Salir de la Aplicación?
          </ModalBody>
          <ModalFoot>
            <AeroButton $hot>Sí</AeroButton>
            <AeroButton>No</AeroButton>
          </ModalFoot>
        </ModalPanel>
      </Modal>

      {/* company selection */}
      <LoginPanel>
        <LogoBox>
          <Gear />
          <LogoText>-Negoci<Sun />s</LogoText>
        </LogoBox>
        <Tagline>Sistema de información para la gestion empresarial</Tagline>
        <SmallButton>EMPRESA</SmallButton>
        <CompanyField>001 EMPRESA DE TRANSPORTE TURISTICO OLANO S.A.</CompanyField>
        <ModuleButton>CONTABILIDAD</ModuleButton>
      </LoginPanel>

      {/* year form */}
      <Win $x={796} $y={801} $w={474} $h={315}>
        <DialogBar />
        <FormClient>
          <FormHeading>EMPRESA DE TRANSPORTE TURISTICO OLANO S.A.</FormHeading>
          <GroupBox>
            <FormRow $lw={201} $gap={5}>
              <FormLabel $drop={5}>Año de Proceso</FormLabel>
              <FormInput $w={60}><Selected>2015</Selected></FormInput>
            </FormRow>
            <FormRow $lw={201} $gap={5}>
              <FormLabel>Mes de Proceso</FormLabel>
              <FormInput $w={36}>1</FormInput>
            </FormRow>
            <FormRow $lw={195} $gap={9} $mt={1}>
              <FormLabel>Fecha</FormLabel>
              <FormInput $w={78} $align="flex-start">31/01/2015</FormInput>
            </FormRow>
          </GroupBox>
          <FormActions>
            <CheckIcon />
            <ExitIcon />
          </FormActions>
        </FormClient>
      </Win>

      {/* annotations */}
      <Ink width={1366} height={1166} viewBox="0 0 1366 1166" fill="none" stroke="#bf2f45" strokeWidth="1">
        <path d="M648 150 563 207M565 184v23M563 205l28 7" />
        <path d="M644 494 488 567M489 545v22M488 567h18" />
        <rect x="395.500" y="561.500" width="96" height="83" rx="24" />
        <path d="M1188 98 1213 335M1188 318 1213 335 1234 311" />
        <rect x="1164.500" y="331.500" width="106" height="34" rx="13" />
        <rect x="639.500" y="528.500" width="690" height="250" />
        <rect x="1003.500" y="557.500" width="38" height="31" rx="7" />
        <path d="M1041 586 1133 605M1118 584 1133 605 1099 609" />
        <path d="M420 720 1075 745M1052 731 1075 745 1055 758" />
        <path d="M217 1117 408 1060M386 1055 408 1060 398 1085" />
        <rect x="406.500" y="1026.500" width="122" height="49" rx="14" />
        <path d="M530 1047 1007 910M988 897 1007 910 999 925" />
        <rect x="952.500" y="1046.500" width="58" height="50" rx="9" />
      </Ink>
      <Callout $x={650} $y={140} $w={28} $h={37} $bold>1</Callout>
      <Callout $x={644} $y={471} $w={26} $h={36} $pr={4}>2</Callout>
      <Callout $x={1166} $y={56} $w={30} $h={40} $pb={8}>3</Callout>
      <Callout $x={381} $y={707} $w={36} $h={34} $pb={10} $pl={6}>4</Callout>
      <Callout $x={181} $y={1099} $w={32} $h={40} $pb={11}>5</Callout>
    </Desktop>
  );
}
